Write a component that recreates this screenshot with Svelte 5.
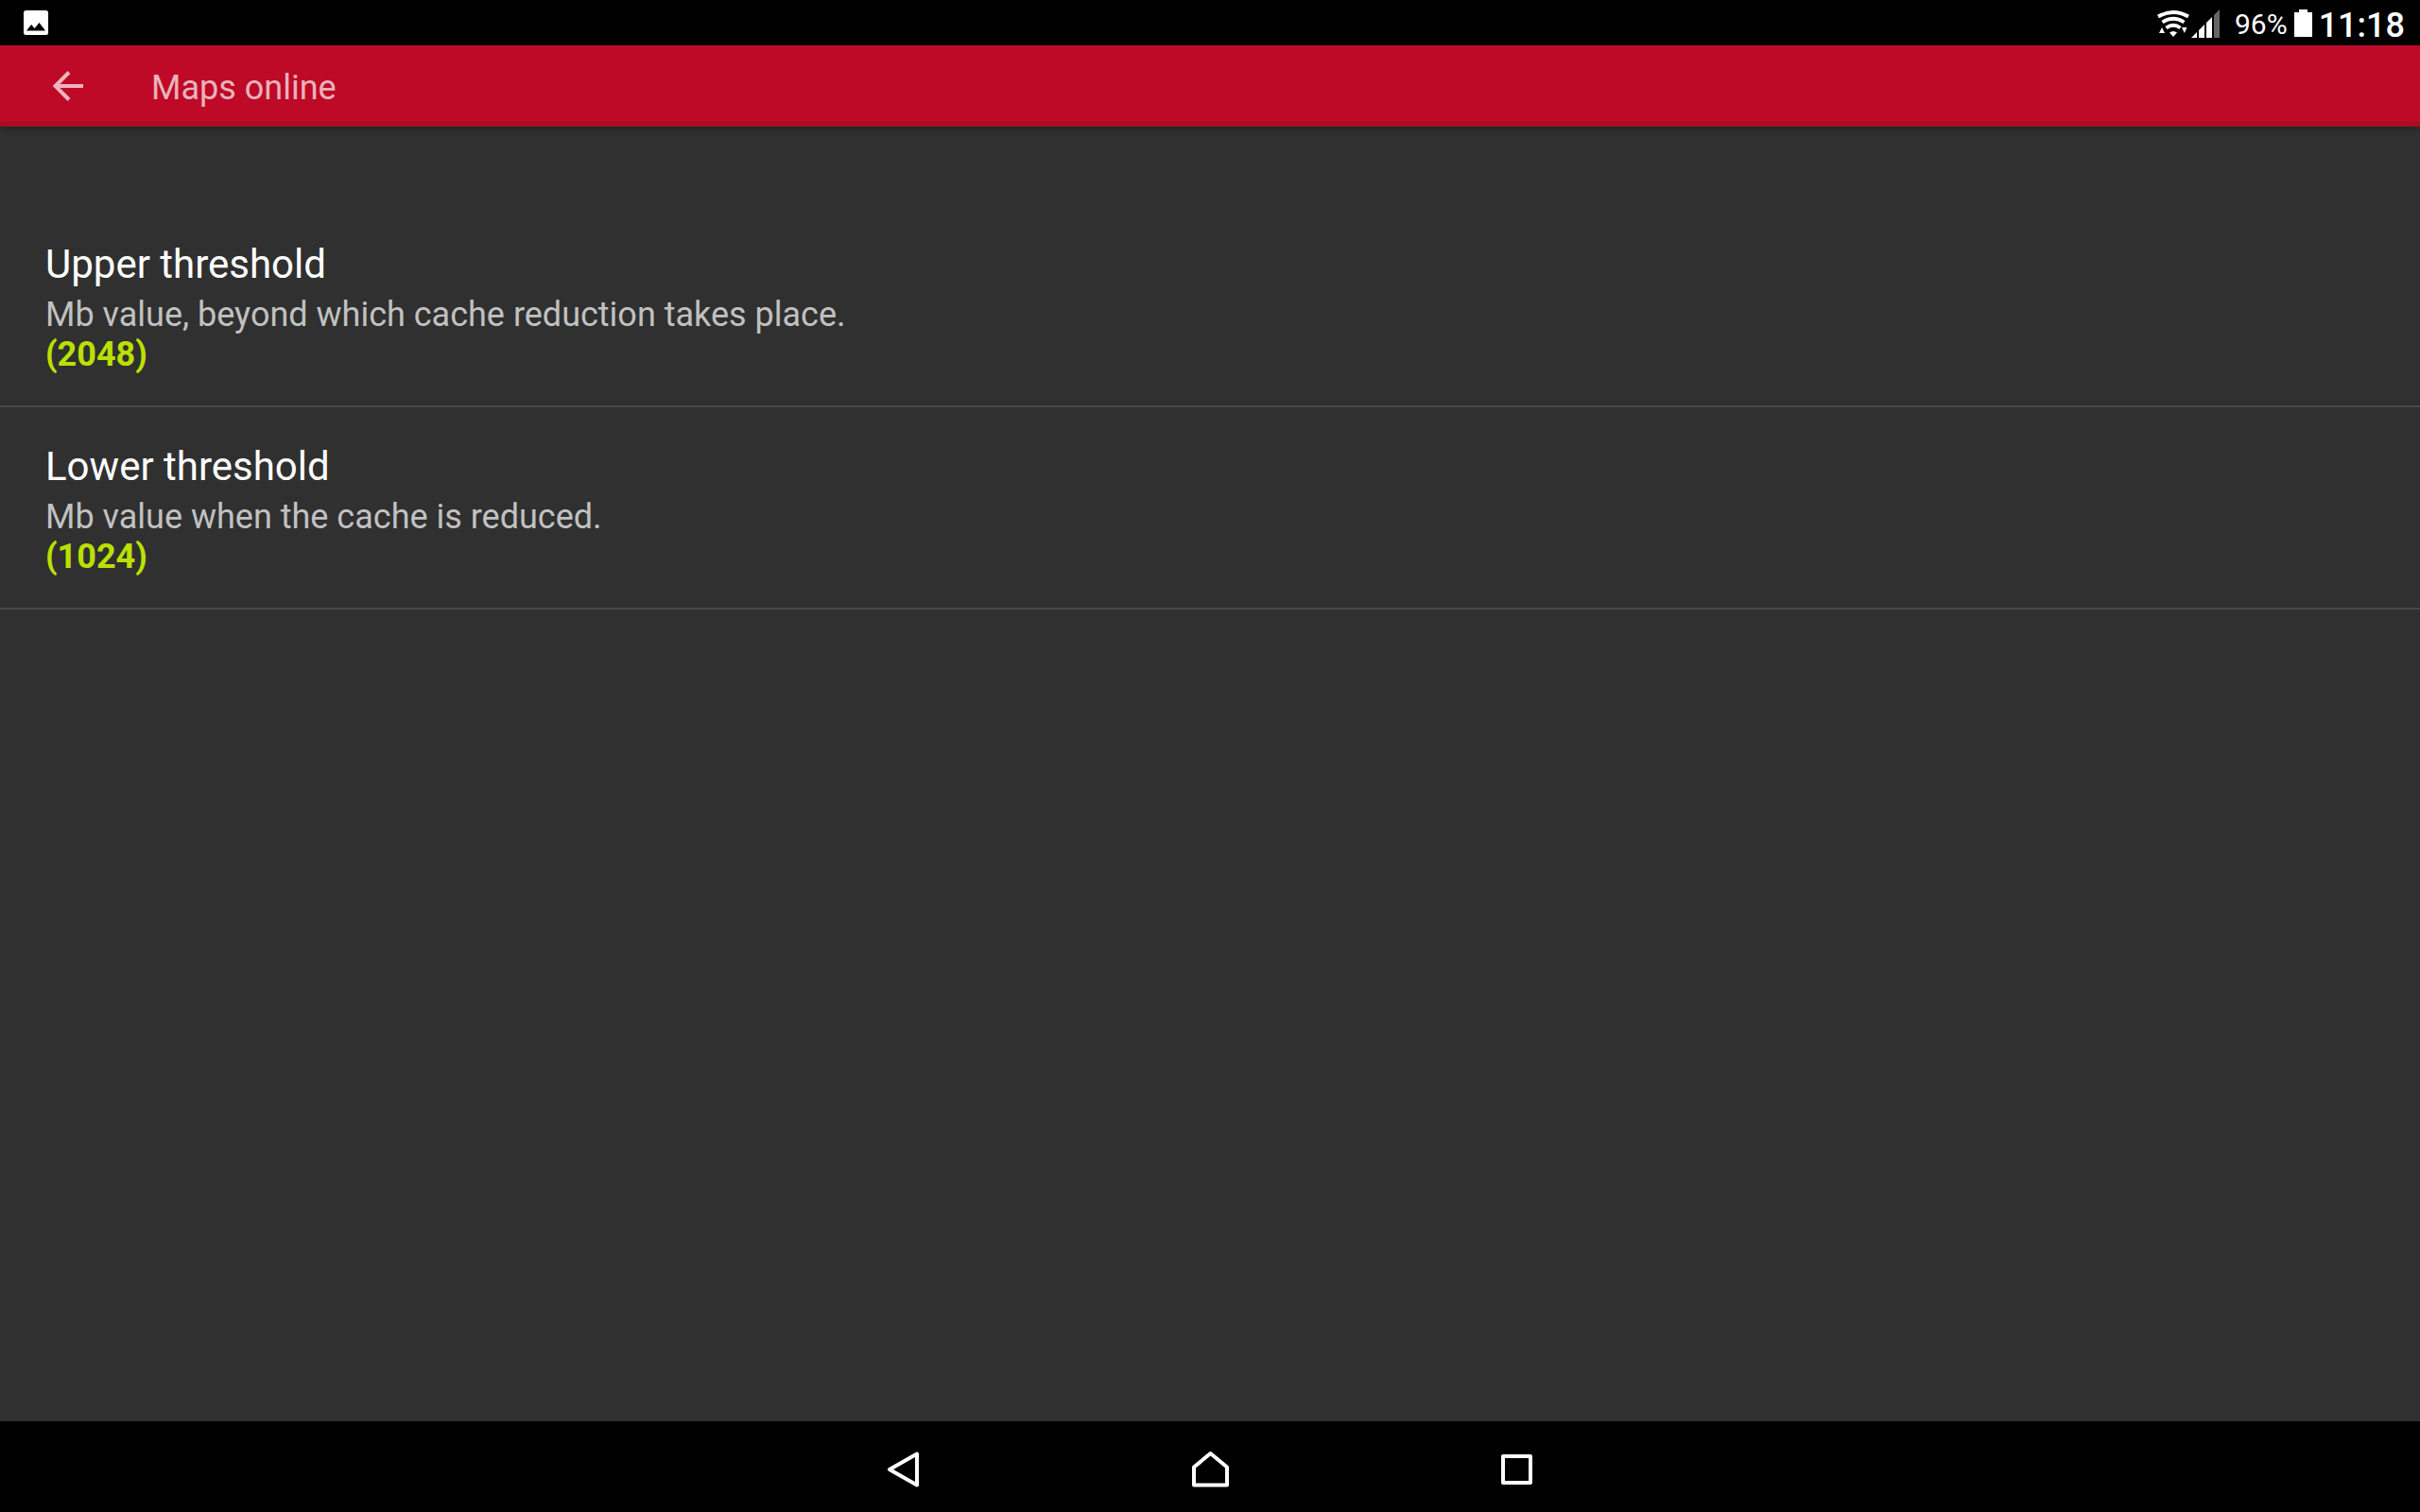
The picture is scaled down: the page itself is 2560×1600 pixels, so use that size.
<script lang="ts">
	type Preference = { id: string; title: string; summary: string; value: number };

	const preferences: Preference[] = [
		{
			id: 'upper',
			title: 'Upper threshold',
			summary: 'Mb value, beyond which cache reduction takes place.',
			value: 2048
		},
		{
			id: 'lower',
			title: 'Lower threshold',
			summary: 'Mb value when the cache is reduced.',
			value: 1024
		}
	];
</script>

<div class="screen">
	<div class="status-bar">
		<svg class="picture" viewBox="0 0 26 26" aria-hidden="true">
			<rect width="26" height="26" rx="2.5" fill="#fff" />
			<path d="M3 21.5 8.2 15l3.3 4L16.5 13l6.5 8.5Z" fill="#000" />
		</svg>
		<div class="status-right">
			<svg class="wifi" viewBox="0 -2 34 30" aria-hidden="true">
				<g fill="none" stroke="#fff" stroke-width="3.8">
					<path d="M1 6.5Q17 -2.5 33 6.5" />
					<path d="M5.5 12.5Q17 5 28.5 12.5" />
					<path d="M9.5 18.5Q17 13 24.5 18.5" />
				</g>
				<path d="M13 23.5Q17 20.5 21 23.5L17 28Z" fill="#fff" />
				<path d="M2 24 5 18l3 6ZM26 18h5.5l-2.7 6Z" fill="#fff" />
			</svg>
			<svg class="signal" viewBox="0 0 30 32" aria-hidden="true">
				<path d="M0 32 6 26v6ZM8 32v-8l6-6v14ZM16 32V16l6-6v22Z" fill="#fff" />
				<path d="M24 32V8l6-6v30Z" fill="#666" />
			</svg>
			<span class="percent">96%</span>
			<svg class="battery" viewBox="0 0 19 29" aria-hidden="true">
				<path d="M5 0h9v3h5v26H0V3h5Z" fill="#fff" />
			</svg>
			<time class="clock">11:18</time>
		</div>
	</div>

	<header class="toolbar">
		<button type="button" class="up" aria-label="Navigate up">
			<svg viewBox="0 0 32 32" aria-hidden="true">
				<path d="M17 1.5 2.5 16 17 30.5M2.5 16H32" fill="none" stroke="currentColor" stroke-width="4" />
			</svg>
		</button>
		<h1>Maps online</h1>
	</header>

	<main>
		<ul>
			{#each preferences as pref (pref.id)}
				<li>
					<button type="button" class="preference">
						<span class="title">{pref.title}</span>
						<span class="summary">{pref.summary}</span>
						<span class="value">({pref.value})</span>
					</button>
				</li>
			{/each}
		</ul>
	</main>

	<nav aria-label="System">
		<button type="button" aria-label="Back">
			<svg viewBox="0 0 40 40" aria-hidden="true">
				<path d="M34 4.5v33L5 21Z" />
			</svg>
		</button>
		<button type="button" aria-label="Home">
			<svg viewBox="0 0 40 40" aria-hidden="true">
				<path d="M20.500 4 38 18.5v19H3v-19Z" />
			</svg>
		</button>
		<button type="button" aria-label="Recent apps">
			<svg viewBox="0 0 40 40" aria-hidden="true">
				<path d="M6 7h29v28H6Z" />
			</svg>
		</button>
	</nav>
</div>

<style>
	:global(body) {
		margin: 0;
		background: #303030;
	}

	.screen {
		display: flex;
		flex-direction: column;
		min-height: 100vh;
		background: #303030;
		color: #fff;
		font-family: Roboto, sans-serif;
	}

	button {
		margin: 0;
		padding: 0;
		border: none;
		background: transparent;
		color: inherit;
		font: inherit;
		cursor: pointer;
	}

	svg {
		display: block;
		flex: none;
	}

	.status-bar {
		display: flex;
		align-items: center;
		justify-content: space-between;
		height: 48px;
		padding: 0 16px 0 25px;
		background: #000;
	}

	.picture {
		width: 26px;
		height: 26px;
	}

	.status-right {
		display: flex;
		align-items: center;
	}

	.wifi {
		width: 34px;
		height: 30px;
		margin-right: 2px;
	}

	.signal {
		width: 30px;
		height: 32px;
		margin-right: 16px;
	}

	.percent,
	.clock {
		line-height: 42px;
	}

	.percent {
		margin-right: 7px;
		padding-top: 4px;
		font-size: 30px;
	}

	.battery {
		width: 19px;
		height: 29px;
		margin-right: 7px;
	}

	.clock {
		padding-top: 6px;
		font-size: 36px;
		font-weight: 500;
	}

	.toolbar {
		display: flex;
		align-items: center;
		height: 76px;
		padding-top: 5px;
		border-bottom: 5px solid #a50f21;
		background: #be0a26;
		color: rgba(255, 255, 255, 0.7);
		box-shadow: 0 2px 8px rgba(0, 0, 0, 0.3);
	}

	.up {
		display: flex;
		align-items: center;
		height: 76px;
		padding: 0 72px 0 56px;
	}

	.up svg {
		width: 32px;
		height: 32px;
	}

	h1 {
		margin: 0;
		padding-top: 4px;
		font-size: 36px;
		font-weight: 400;
		line-height: 42px;
	}

	main {
		flex: 1;
		padding-top: 83px;
	}

	ul {
		margin: 0;
		padding: 0;
		list-style: none;
	}

	li {
		border-bottom: 2px solid #494949;
	}

	.preference {
		display: flex;
		flex-direction: column;
		align-items: flex-start;
		width: 100%;
		padding: 38px 48px 33px;
		text-align: left;
	}

	.title {
		margin-bottom: 7px;
		font-size: 42px;
		line-height: 50px;
	}

	.summary,
	.value {
		font-size: 36px;
		line-height: 42px;
	}

	.summary {
		color: #c1c1c1;
	}

	.value {
		color: #bbe000;
		font-weight: 700;
	}

	nav {
		display: flex;
		justify-content: center;
		height: 96px;
		background: #000;
	}

	nav button {
		display: flex;
		align-items: center;
		justify-content: center;
		width: 324px;
		padding-top: 4px;
	}

	nav svg {
		width: 40px;
		height: 40px;
		fill: none;
		stroke: #fff;
		stroke-width: 4;
		stroke-linejoin: round;
	}
</style>
